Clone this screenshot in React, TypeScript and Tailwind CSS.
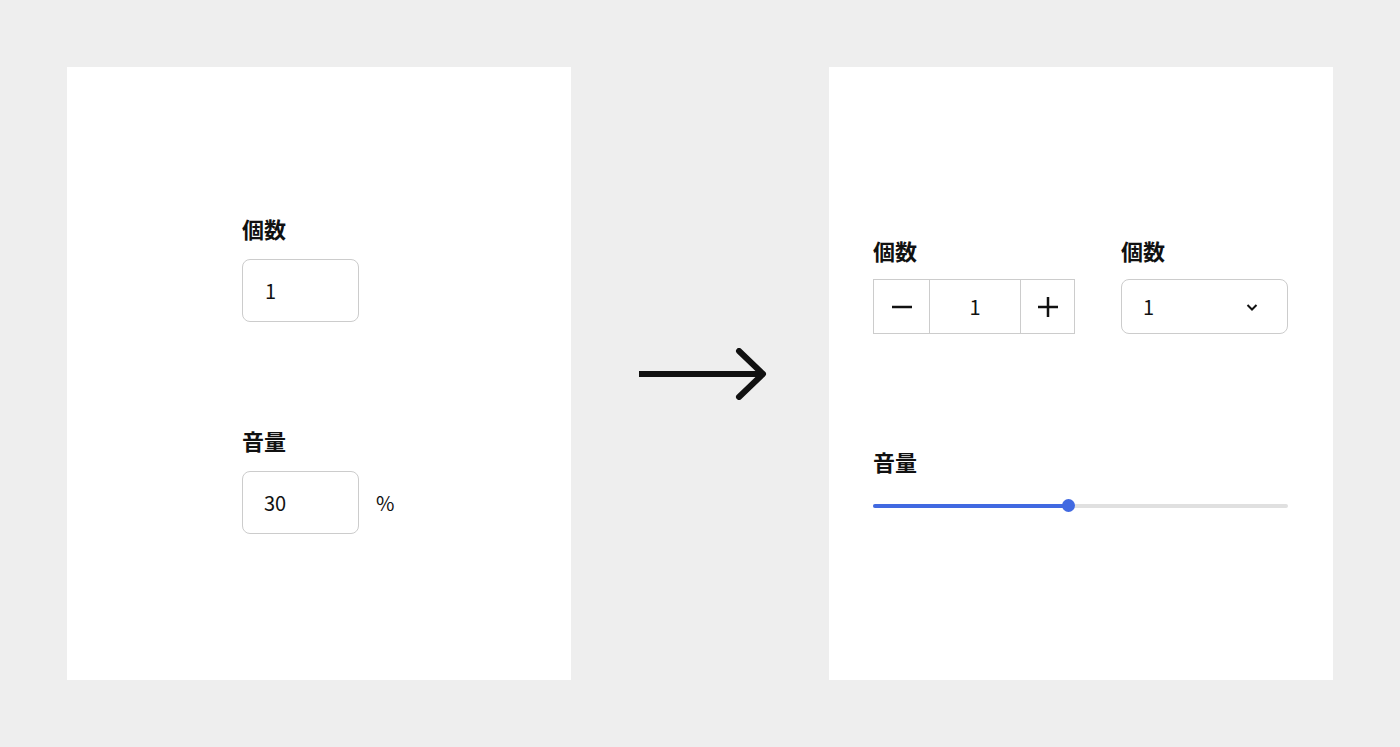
const jp = { fontFamily: '"Noto Sans CJK JP", "Noto Sans", sans-serif' };

function Label({ children }: { children: string }) {
  return <div className="text-[22px] font-bold leading-[30px] text-[#111]">{children}</div>;
}

function Minus() {
  return (
    <svg width="22" height="22" viewBox="0 0 22 22">
      <path d="M1 11h20" stroke="#111" strokeWidth="2.5" />
    </svg>
  );
}

function Plus() {
  return (
    <svg width="22" height="22" viewBox="0 0 22 22">
      <path d="M1 11h20M11 1v20" stroke="#111" strokeWidth="2.5" />
    </svg>
  );
}

export default function App() {
  const volume = 47;
  return (
    <div className="h-[747px] w-[1400px] bg-[#eeeeee] px-[67px] py-[67px] flex items-center justify-between" style={jp}>
      <div className="w-[504px] h-[613px] bg-white pl-[175px] pt-[146px] text-[#111]">
        <Label>個数</Label>
        <div className="mt-[16px] w-[117px] h-[63px] rounded-lg border border-[#cccccc] flex items-center pl-[22px] text-[20px]">
          1
        </div>
        <div className="mt-[103px]">
          <Label>音量</Label>
        </div>
        <div className="mt-[16px] flex items-center gap-[17px]">
          <div className="w-[117px] h-[63px] rounded-lg border border-[#cccccc] flex items-center pl-[21px] text-[20px]">
            30
          </div>
          <span className="text-[20px]">%</span>
        </div>
      </div>

      <svg width="130" height="52" viewBox="0 0 130 52" className="ml-[5px]">
        <path d="M1 26h124" stroke="#111" strokeWidth="6" />
        <path d="M101 3l24 23-24 23" stroke="#111" strokeWidth="6" fill="none" strokeLinecap="round" strokeLinejoin="round" />
      </svg>

      <div className="w-[504px] h-[613px] bg-white pl-[44px] pr-[45px] pt-[168px] text-[#111]">
        <div className="flex justify-between">
          <div>
            <Label>個数</Label>
            <div className="mt-[14px] flex h-[55px] border border-[#cccccc]">
              <button className="w-[56px] flex items-center justify-center border-r border-[#cccccc]">
                <Minus />
              </button>
              <div className="w-[90px] flex items-center justify-center text-[20px]">1</div>
              <button className="w-[54px] flex items-center justify-center border-l border-[#cccccc]">
                <Plus />
              </button>
            </div>
          </div>
          <div>
            <Label>個数</Label>
            <div className="mt-[14px] w-[167px] h-[55px] rounded-lg border border-[#cccccc] flex items-center justify-between pl-[21px] pr-[28px] text-[20px]">
              <span>1</span>
              <svg width="14" height="10" viewBox="0 0 14 10">
                <path d="M2.5 3l4.5 4.5 4.5-4.5" stroke="#111" strokeWidth="2" fill="none" />
              </svg>
            </div>
          </div>
        </div>
        <div className="mt-[112px]">
          <Label>音量</Label>
        </div>
        <div className="mt-[23px] relative h-[14px] flex items-center">
          <div className="w-full h-[4px] rounded-full bg-[#e0e0e0]">
            <div className="h-full rounded-full bg-[#4169e1]" style={{ width: `${volume}%` }} />
          </div>
          <div
            className="absolute top-0 w-[13px] h-[13px] -ml-[6px] rounded-full bg-[#4169e1]"
            style={{ left: `${volume}%` }}
          />
        </div>
      </div>
    </div>
  );
}
